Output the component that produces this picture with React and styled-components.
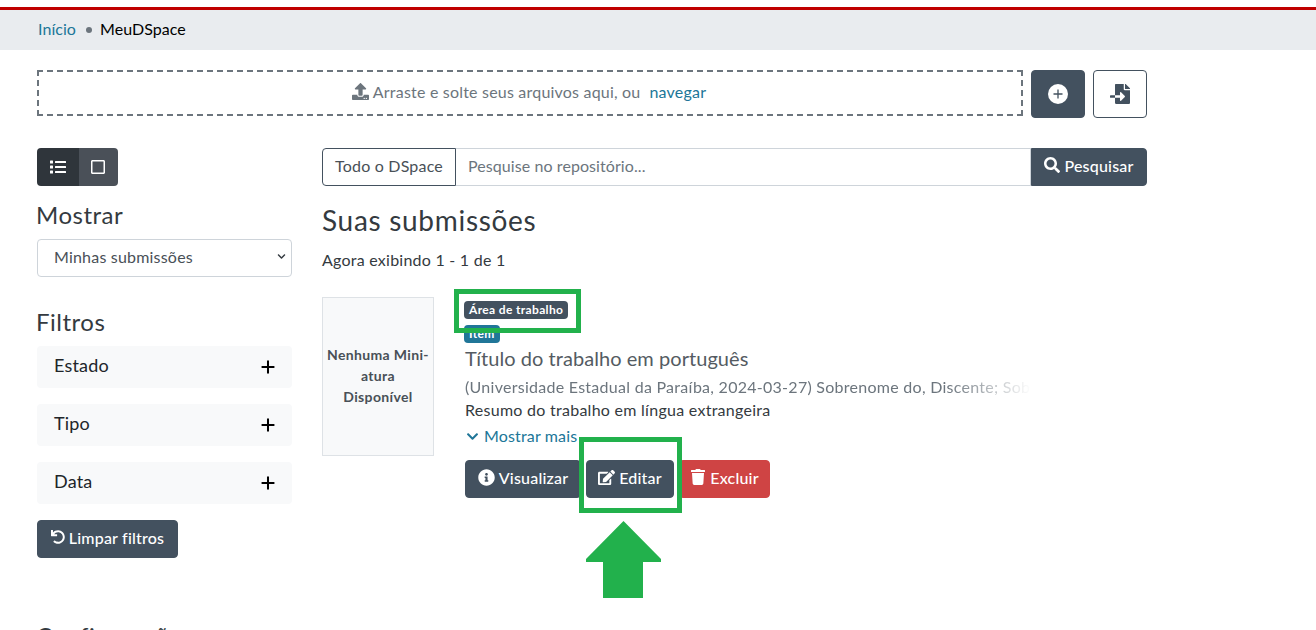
import React from 'react';
import styled, { createGlobalStyle } from 'styled-components';
import { FaList, FaRegSquare, FaFileImport, FaSearch, FaInfoCircle, FaEdit, FaTrash, FaUndo, FaChevronDown, FaUpload } from 'react-icons/fa';

const Global = createGlobalStyle`
  html, body { margin: 0; padding: 0; background: #fff; height: 630px; overflow: hidden; }
  body { font-family: Lato, "Noto Sans", "Liberation Sans", sans-serif; font-size: 16px; color: #343a40; letter-spacing: .2px; }
  * { box-sizing: border-box; }
`;

const Page = styled.div`position: relative; width: 1316px; height: 630px; overflow: hidden; padding-top: 7px;`;
const Crumbs = styled.nav`
  height: 43px; background: #e9ecef; border-top: 3px solid #c00000;
  padding: 0 37px 3px 38px; display: flex; align-items: center; font-size: 16px; color: #000; letter-spacing: .05px;
`;
const CrumbLink = styled.a`color: #207698;`;
const Dot = styled.span`width: 6px; height: 6px; border-radius: 50%; background: #6c757d; margin: 3px 8px 0 10px;`;
const Container = styled.div`width: 1110px; margin-left: 37px;`;
const UploadRow = styled.div`display: flex; gap: 8px; margin-top: 20px; align-items: flex-start;`;
const Drop = styled.div`
  flex: 1; height: 46px; border: 2px dashed #6c757d; color: #6c757d;
  display: flex; align-items: center; justify-content: center; gap: 4px; padding: 0 2px 3px 0;
`;
const DropLink = styled.a`color: #207698; margin-left: 5px;`;
const IconBtn = styled.button`
  width: 54px; height: 48px; border-radius: 4px; display: flex; align-items: center; justify-content: center;
  border: 1px solid #43515f; background: ${p => (p.$outline ? '#fff' : '#43515f')};
  color: ${p => (p.$outline ? '#43515f' : '#fff')}; font-size: 20px; padding: 0;
`;
const Columns = styled.div`display: grid; grid-template-columns: 255px 825px; column-gap: 30px; margin-top: 30px;`;
const Side = styled.aside`display: flex; flex-direction: column; align-items: stretch;`;
const Switch = styled.div`display: flex; width: 81px; height: 38px; border-radius: 4px; overflow: hidden;`;
const SwitchBtn = styled.div`
  flex: ${p => (p.$active ? '0 0 42px' : '1')}; display: flex; align-items: center; justify-content: center;
  color: #fff; font-size: 16px; padding-right: ${p => (p.$active ? 0 : 2)}px; background: ${p => (p.$active ? '#2f353b' : '#4a5058')};
`;
const SideTitle = styled.h2`font-size: 24px; font-weight: 400; line-height: 29px; margin: ${p => p.$top}px 0 10px -1px; color: #343a40; letter-spacing: .5px;`;
const Select = styled.div`
  height: 38px; border: 1px solid #ced4da; border-radius: 4px; color: #495057; padding: 0 5px 4px 16px;
  display: flex; align-items: center; justify-content: space-between; font-size: 16px;
`;
const Panel = styled.div`
  height: 42px; background: #f8f9fa; border-radius: 4px; margin-bottom: 16px; padding: 0 13px 4px 17px;
  display: flex; align-items: center; justify-content: space-between; font-size: 18px; color: #212529;
`;
const PlusSvg = styled.svg`width: 22px; height: 22px; margin-top: 4px; stroke: #000; stroke-width: 2.2; fill: none;`;
const Btn = styled.button`
  height: 38px; border-radius: 4px; border: 1px solid ${p => p.$bg || '#43515f'}; background: ${p => p.$bg || '#43515f'}; color: #fff;
  font: inherit; font-size: 16px; font-weight: 500; letter-spacing: .2px; display: inline-flex; align-items: center; justify-content: center; gap: 4px; padding: 0 0 4px;
`;
const ClearBtn = styled(Btn)`align-self: flex-start; width: 141px;`;
const Main = styled.main`display: flex; flex-direction: column;`;
const SearchBar = styled.div`display: flex; height: 38px;`;
const Scope = styled.div`
  width: 134px; border: 1px solid #43515f; border-radius: 4px 0 0 4px; background: #fff; color: #495057;
  display: flex; align-items: center; justify-content: center; padding-bottom: 4px;
`;
const SearchInput = styled.div`
  flex: 1; border: 1px solid #ced4da; border-left: 0; color: #6c757d; display: flex; align-items: center; padding: 0 0 4px 12px; letter-spacing: .08px;
`;
const SearchBtn = styled(Btn)`width: 116px; border-radius: 0 4px 4px 0;`;
const Title = styled.h1`font-size: 28px; font-weight: 400; line-height: 34px; margin: 17px 0 0; color: #343a40; letter-spacing: .7px;`;
const Count = styled.p`margin: 11px 0 0; line-height: 24px; color: #343a40; letter-spacing: .24px;`;
const Result = styled.article`display: grid; grid-template-columns: 112px 1fr; column-gap: 30px; margin-top: 25px;`;
const Thumb = styled.div`
  height: 159px; background: #f8f9fa; border: 1px solid #dee2e6; display: flex; align-items: center; justify-content: center;
  text-align: center; font-size: 14px; font-weight: 700; line-height: 21px; color: #495057; padding: 0 2px 2px; letter-spacing: .35px;
`;
const Body = styled.div`display: flex; flex-direction: column; align-items: flex-start; min-width: 0;`;
const Badge = styled.span`
  display: inline-block; height: 18px; line-height: 17px; border-radius: 4px; padding: 0 5px; color: #fff; font-size: 12px; font-weight: 700; letter-spacing: .35px;
  background: ${p => p.$bg}; margin-top: ${p => p.$mt}px;
`;
const ItemTitle = styled.h3`font-size: 20px; font-weight: 400; line-height: 24px; margin: 3px 0 0 1px; color: #545b62; letter-spacing: .05px;`;
const Citation = styled.div`
  width: 566px; margin: 5px 0 0 1px; line-height: 24px; white-space: nowrap; overflow: hidden; color: #6c757d; letter-spacing: .27px;
  -webkit-mask-image: linear-gradient(to right, #000 85%, transparent 100%); mask-image: linear-gradient(to right, #000 85%, transparent 100%);
`;
const Abstract = styled.div`line-height: 24px; margin: -1px 0 0 1px; color: #343a40; letter-spacing: .27px;`;
const More = styled.a`color: #207698; display: flex; align-items: center; gap: 5px; line-height: 24px; margin: 2px 0 0 2px; letter-spacing: .15px;`;
const Actions = styled.div`display: flex; gap: 5px; margin: 12px 0 0 1px;`;
const ActionBtn = styled(Btn)`width: ${p => p.$w}px;`;
const Frame = styled.div`
  position: absolute; border: 5px solid #22b14c; left: ${p => p.$x}px; top: ${p => p.$y}px; width: ${p => p.$w}px; height: ${p => p.$h}px;
`;
const Arrow = styled.svg`position: absolute; left: 586px; top: 521px;`;
const Cut = styled.div`margin-top: 63px; margin-left: -1px; font-size: 24px; line-height: 29px; color: #343a40; letter-spacing: .5px;`;

const Plus = () => <PlusSvg viewBox="0 0 24 24"><path d="M5 12h14M12 5v14" /></PlusSvg>;

export default function App() {
  return (
    <Page>
      <Global />
      <Crumbs>
        <CrumbLink>Início</CrumbLink><Dot /><span>MeuDSpace</span>
      </Crumbs>
      <Container>
        <UploadRow>
          <Drop><FaUpload size={17} /> Arraste e solte seus arquivos aqui, ou <DropLink>navegar</DropLink></Drop>
          <IconBtn>
            <svg width="20" height="20" viewBox="0 0 20 20"><circle cx="10" cy="10" r="10" fill="#fff" /><path d="M10 5.5v9M5.5 10h9" stroke="#43515f" strokeWidth="1.3" /></svg>
          </IconBtn>
          <IconBtn $outline><FaFileImport /></IconBtn>
        </UploadRow>
        <Columns>
          <Side>
            <Switch>
              <SwitchBtn $active><FaList /></SwitchBtn>
              <SwitchBtn><FaRegSquare /></SwitchBtn>
            </Switch>
            <SideTitle $top={14}>Mostrar</SideTitle>
            <Select>Minhas submissões <FaChevronDown size={9} color="#343a40" /></Select>
            <SideTitle $top={30}>Filtros</SideTitle>
            <Panel>Estado <Plus /></Panel>
            <Panel>Tipo <Plus /></Panel>
            <Panel>Data <Plus /></Panel>
            <ClearBtn><FaUndo size={14} /> Limpar filtros</ClearBtn>
            <Cut>Configurações</Cut>
          </Side>
          <Main>
            <SearchBar>
              <Scope>Todo o DSpace</Scope>
              <SearchInput>Pesquise no repositório...</SearchInput>
              <SearchBtn><FaSearch size={16} /> Pesquisar</SearchBtn>
            </SearchBar>
            <Title>Suas submissões</Title>
            <Count>Agora exibindo 1 - 1 de 1</Count>
            <Result>
              <Thumb>Nenhuma Mini-<br />atura<br />Disponível</Thumb>
              <Body>
                <Badge $bg="#43515f" $mt={4}>Área de trabalho</Badge>
                <Badge $bg="#207698" $mt={6}>Item</Badge>
                <ItemTitle>Título do trabalho em português</ItemTitle>
                <Citation>(Universidade Estadual da Paraíba, 2024-03-27) Sobrenome do, Discente; Sobrenome do, Orientador</Citation>
                <Abstract>Resumo do trabalho em língua extrangeira</Abstract>
                <More><FaChevronDown size={13} /> Mostrar mais</More>
                <Actions>
                  <ActionBtn $w={116}><FaInfoCircle size={17} /> Visualizar</ActionBtn>
                  <ActionBtn $w={88}><FaEdit size={17} /> Editar</ActionBtn>
                  <ActionBtn $w={91} $bg="#cf4444"><FaTrash size={16} /> Excluir</ActionBtn>
                </Actions>
              </Body>
            </Result>
          </Main>
        </Columns>
      </Container>
      <Frame $x={454} $y={289} $w={127} $h={44} />
      <Frame $x={579} $y={437} $w={103} $h={76} />
      <Arrow width="76" height="78" viewBox="0 0 76 78"><path d="M37.5 0L75 38V41H57V77H17V41H0V38Z" fill="#22b14c" /></Arrow>
    </Page>
  );
}
